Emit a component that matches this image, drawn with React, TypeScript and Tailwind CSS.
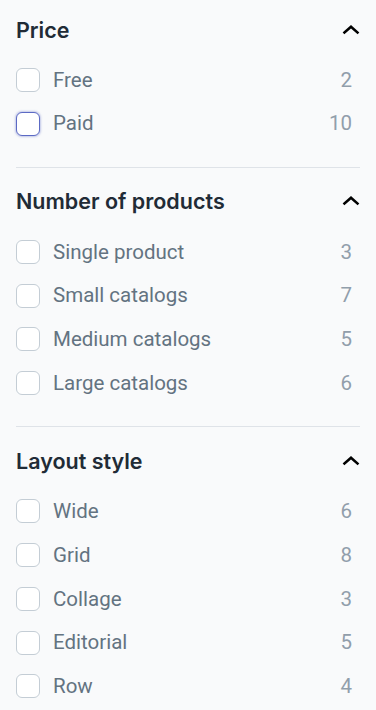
import React from "react";

type Item = { label: string; count: number; focus?: boolean };
const sections: { title: string; items: Item[] }[] = [
  { title: "Price", items: [{ label: "Free", count: 2 }, { label: "Paid", count: 10, focus: true }] },
  {
    title: "Number of products",
    items: [
      { label: "Single product", count: 3 },
      { label: "Small catalogs", count: 7 },
      { label: "Medium catalogs", count: 5 },
      { label: "Large catalogs", count: 6 },
    ],
  },
  {
    title: "Layout style",
    items: [
      { label: "Wide", count: 6 },
      { label: "Grid", count: 8 },
      { label: "Collage", count: 3 },
      { label: "Editorial", count: 5 },
      { label: "Row", count: 4 },
    ],
  },
];

function Chevron() {
  return (
    <svg width="18" height="16" viewBox="0 0 18 16" fill="none">
      <path d="M2.5 10.5L9 4.8l6.5 5.7" stroke="#000" strokeWidth="2.6" strokeLinecap="square" />
    </svg>
  );
}

export default function App() {
  return (
    <div className="min-h-[710px] w-[376px] bg-[#f9fafb] px-4 pt-[14px]" style={{ fontFamily: "Roboto, sans-serif" }}>
      {sections.map((s, i) => (
        <div key={s.title} className={i > 0 ? "border-t border-[#dfe3e8]" : ""}>
          <div className={`flex items-center justify-between ${i > 0 ? "pt-[17.5px]" : ""}`}>
            <h2 className="text-[21.5px] font-semibold leading-[32px] text-[#212b36]" style={{ fontFamily: "Inter, sans-serif" }}>
              {s.title}
            </h2>
            <Chevron />
          </div>
          <ul className={`${i > 0 ? "pt-[13px]" : "pt-[12px]"} pb-[21px]`}>
            {s.items.map((it) => (
              <li key={it.label} className="flex h-[43.75px] items-center pr-[8px]">
                <span
                  className={`h-[24px] w-[24px] shrink-0 rounded-[6px] bg-white ${
                    it.focus ? "border-[1.5px] border-[#5c6ac4] shadow-[0_0_2px_1px_rgba(92,106,196,0.35)]" : "border border-[#c4cdd5]"
                  }`}
                />
                <span className="ml-[13px] flex-1 text-[20.5px] text-[#637381]">{it.label}</span>
                <span className="text-[20.5px] text-[#919eab]">{it.count}</span>
              </li>
            ))}
          </ul>
        </div>
      ))}
    </div>
  );
}
